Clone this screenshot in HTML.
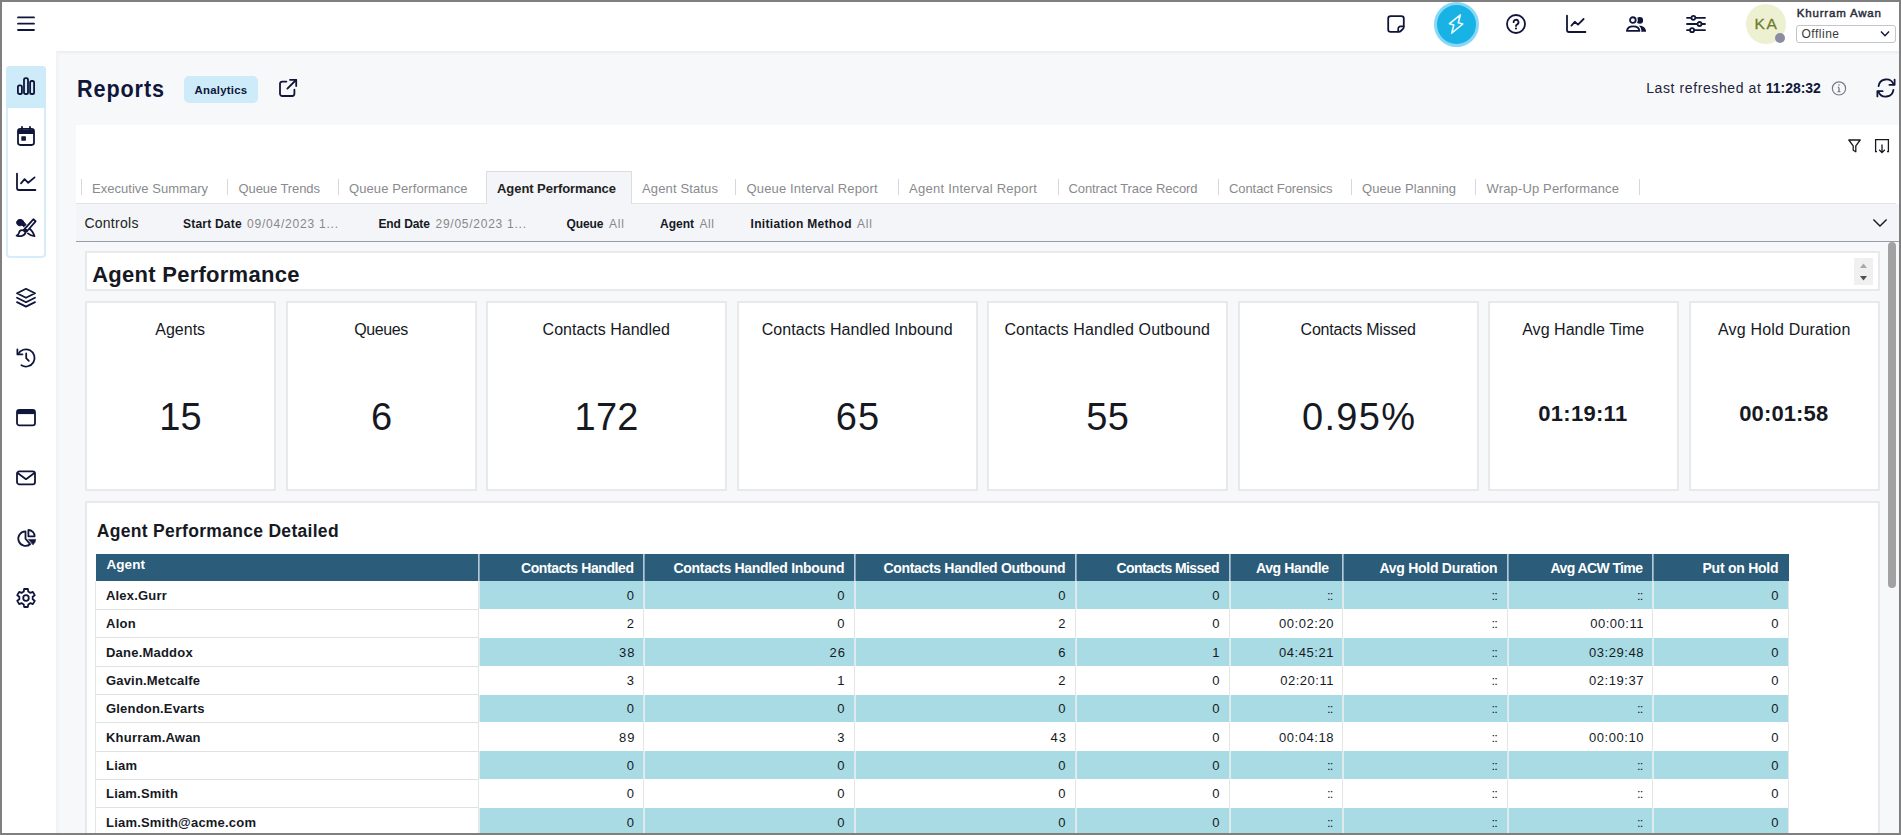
<!DOCTYPE html>
<html lang="en">
<head>
<meta charset="utf-8">
<title>Reports - Analytics</title>
<style>
*{box-sizing:border-box;margin:0;padding:0}
html,body{width:1901px;height:835px;overflow:hidden;background:#fff;font-family:"Liberation Sans",sans-serif}
#app{position:absolute;left:0;top:0;width:1901px;height:835px;overflow:hidden;background:#fff}
.t{position:absolute;white-space:pre;display:block}
.abs{position:absolute}
svg{position:absolute;overflow:visible}
.frame{position:absolute;left:0;top:0;width:1901px;height:835px;border-style:solid;border-color:#7f7f7f;border-width:2px 2px 2px 2px;pointer-events:none;z-index:50}
.main{position:absolute;left:56px;top:51px;width:1845px;height:784px;background:#f7f8fa}
.card{position:absolute;background:#fff;border:2px solid #e9e9ec}
.ico{stroke:#10163a;fill:none;stroke-width:1.8;stroke-linecap:round;stroke-linejoin:round}
</style>
</head>
<body>
<div id="app">

<div class="main"></div>
<div class="abs" style="left:56px;top:51px;width:4px;height:784px;background:linear-gradient(90deg,#f0f1f3,#f7f8fa)"></div>
<div class="abs" style="left:56px;top:51px;width:1845px;height:4px;background:linear-gradient(#ececee,#f7f8fa)"></div>
<nav aria-label="Main navigation">
<div class="abs" style="left:0;top:51px;width:56px;height:784px;background:#fff"></div>
<div class="abs" style="left:6px;top:66px;width:40px;height:192px;border:2px solid #d5edfa;border-radius:4px;background:#fff"></div>
<div class="abs" style="left:6px;top:66px;width:40px;height:42px;background:#cdebf8;border-radius:4px 4px 0 0"></div>
<svg style="left:16px;top:76px" width="20" height="20" viewBox="0 0 20 20" ><g class="ico" stroke-width="1.7"><rect x="1.9" y="9.4" width="4" height="8.6" rx="1.6"/><rect x="8" y="2.2" width="4" height="15.8" rx="1.6"/><rect x="14.1" y="5" width="4" height="13" rx="1.6"/></g></svg>
<svg style="left:16px;top:125px" width="20" height="22" viewBox="0 0 20 22" ><g class="ico" stroke-width="1.9"><rect x="2" y="3.8" width="16" height="16.2" rx="2.4"/><path d="M6 1.800v3M14 1.800v3"/><path d="M2 6.800h16" stroke-width="4.400" stroke-linecap="butt"/><rect x="5.300" y="11.200" width="4.600" height="4.600" rx=".5" fill="#10163a" stroke="none"/></g></svg>
<svg style="left:16px;top:172px" width="20" height="20" viewBox="0 0 20 20" ><g class="ico" stroke-width="1.9"><path d="M1 1.6V16a2 2 0 0 0 2 2h16.4"/><path d="M5 11.400L8.600 7.200L12.200 10.800L18.600 5.400"/></g></svg>
<svg style="left:16px;top:218px" width="20" height="20" viewBox="0 0 20 20" ><g class="ico" stroke-width="1.700"><path d="M12.300 9.800c3.200 2.200 5.200 5 6.200 8.400-2.600-.3-4.800-1.200-6.600-2.800" fill="none"/><path d="M4.700 1.500a3.200 3.200 0 0 1 3.100 2.500l2.300 2.700-2.500 2.100-1.600-1.900A3.200 3.200 0 1 1 4.700 1.500z" fill="#10163a" stroke-width="1"/><path d="M17.300 1.300l2.300 2-8.400 9.700-2.500-2.100z" fill="#fff"/><path d="M8.900 10.500l2.600 2.200-1.500 1.800-2.700-2.200z" fill="#10163a" stroke-width="1"/><path d="M7.300 12.300c-2.300-.5-3.800.5-4.200 2.300-.3 1.400-.9 2.400-2.500 3 3.300 1 8.200.7 9-3.300z" fill="#fff"/></g></svg>
<svg style="left:16px;top:287px" width="20" height="22" viewBox="0 0 20 22" ><g class="ico" stroke-width="1.9"><path d="M10 1.800l9 4.500-9 4.500-9-4.500z"/><path d="M1 10.700l9 4.500 9-4.500"/><path d="M1 15.100l9 4.500 9-4.500"/></g></svg>
<svg style="left:16px;top:347px" width="20" height="22" viewBox="0 0 20 22" ><g class="ico" stroke-width="1.9"><path d="M1.400 2.400v5h5"/><path d="M2.200 7.200A8.600 8.600 0 1 1 5.400 18.200"/><path d="M10.200 6.400v4.800l2.600 2.600"/></g></svg>
<svg style="left:16px;top:408px" width="20" height="20" viewBox="0 0 20 20" ><g class="ico" stroke-width="1.9"><rect x="1" y="2" width="18" height="15.400" rx="2.400"/><path d="M1.400 4.200h17.200" stroke-width="3.800" stroke-linecap="butt"/></g></svg>
<svg style="left:16px;top:469px" width="20" height="18" viewBox="0 0 20 18" ><g class="ico" stroke-width="1.9"><rect x="1" y="2.400" width="18" height="13" rx="2.400"/><path d="M1.600 4l8.400 6.200 8.400-6.200"/></g></svg>
<svg style="left:16px;top:528px" width="21" height="20" viewBox="0 0 21 20" ><g class="ico" stroke-width="1.700"><path d="M9.500 3.450A7.200 7.200 0 1 0 14.100 16.200L9.500 10.650z"/><path d="M12.400 2A6.200 6.200 0 0 1 18.600 8.300H12.400z"/><path d="M12.600 11.400H19.700A7.400 7.400 0 0 1 17.100 16.800z" fill="#10163a" stroke-width=".6"/></g></svg>
<svg style="left:16px;top:588px" width="20" height="20" viewBox="0 0 20 20" ><g class="ico" stroke-width="1.9"><path d="M8.09 1.00L11.91 1.00L12.24 3.58L14.44 4.85L16.84 3.84L18.75 7.16L16.68 8.73L16.68 11.27L18.75 12.84L16.84 16.16L14.44 15.15L12.24 16.42L11.91 19.00L8.09 19.00L7.76 16.42L5.56 15.15L3.16 16.16L1.25 12.84L3.32 11.27L3.32 8.73L1.25 7.16L3.16 3.84L5.56 4.85L7.76 3.58z" stroke-linejoin="round"/><circle cx="10" cy="10" r="2.800"/></g></svg>
</nav>
<header>
<div class="abs" style="left:0;top:0;width:1901px;height:51px;background:#fff"></div>
<svg style="left:16px;top:14px" width="20" height="20" viewBox="0 0 20 20" ><g class="ico" stroke-width="2"><path d="M2 3.400h16M2 9.700h16M2 16h16"/></g></svg>
<svg style="left:1386px;top:14px" width="20" height="20" viewBox="0 0 20 20" ><g class="ico" stroke-width="1.900"><path d="M4.600 2.200h10.800a2.400 2.400 0 0 1 2.400 2.400v8.200c0 .8-.3 1.500-.8 2l-2.200 2.200c-.5.500-1.200.800-2 .800H4.600a2.400 2.400 0 0 1-2.400-2.400V4.600a2.400 2.400 0 0 1 2.400-2.400z"/><path d="M17.500 12.400h-3.100a2.200 2.200 0 0 0-2.200 2.200v2.900" stroke-width="1.700"/></g></svg>
<div class="abs" style="left:1433.7px;top:2px;width:45px;height:45px;border-radius:50%;background:#19b2e5;border:3px solid #86d8f6"></div>
<svg style="left:1446px;top:14px" width="20" height="20" viewBox="0 0 20 20" ><path d="M14.400 .9L3.500 9.700l4.300 1.400-2.100 8L16.800 10l-4.500-1.200z" fill="none" stroke="#eafaff" stroke-width="1.600" stroke-linejoin="round"/></svg>
<svg style="left:1506px;top:14px" width="20" height="20" viewBox="0 0 20 20" ><g class="ico" stroke-width="1.900"><circle cx="10" cy="10" r="9"/><path d="M7.600 8.200a2.450 2.450 0 1 1 3.600 2.200c-.8.400-1.200.9-1.200 1.600"/><circle cx="10" cy="14.500" r="1.100" fill="#10163a" stroke="none"/></g></svg>
<svg style="left:1566px;top:14px" width="20" height="20" viewBox="0 0 20 20" ><g class="ico" stroke-width="1.900"><path d="M1 1.600V16a2 2 0 0 0 2 2h16.400"/><path d="M5.400 11.600l3.400-3.800 3.200 2.800 5.600-5.600"/></g></svg>
<svg style="left:1626px;top:15px" width="21" height="18" viewBox="0 0 21 18" ><g class="ico" stroke-width="1.800"><circle cx="13.800" cy="5.400" r="3.300" fill="#10163a" stroke="none"/><path d="M12.600 10.900c4.300-.6 7.300 1.900 7.500 5.900h-6.500z" fill="#10163a" stroke="none"/><circle cx="6.850" cy="5.100" r="4.950" fill="#fff" stroke="none"/><path d="M.95 15.900c.3-3 2.700-4.600 6.250-4.600s5.950 1.600 6.250 4.600z" fill="#fff" stroke="#fff" stroke-width="4"/><circle cx="6.850" cy="5.100" r="2.850"/><path d="M.95 15.900c.3-3 2.700-4.600 6.250-4.600s5.950 1.600 6.250 4.600z"/></g></svg>
<svg style="left:1686px;top:14px" width="20" height="20" viewBox="0 0 20 20" ><g class="ico" stroke-width="1.900"><path d="M1 3.800h18M1 10h18M1 16.200h18"/><circle cx="7.400" cy="3.800" r="2" fill="#fff"/><circle cx="13.500" cy="10" r="2" fill="#fff"/><circle cx="6.100" cy="16.200" r="2" fill="#fff"/></g></svg>
<div class="abs" style="left:1746px;top:4px;width:40px;height:40px;border-radius:50%;background:#eef0d2"></div>
<span class="t" style="left:1754.40px;top:14.8px;font-size:15.5px;line-height:17px;color:#6d7c2a;letter-spacing:1.712px;-webkit-text-stroke:.3px #6d7c2a;">KA</span>
<div class="abs" style="left:1775px;top:33px;width:10px;height:10px;border-radius:50%;background:#8b8da0"></div>
<span class="t" style="left:1796.70px;top:6.600000000000001px;font-size:11.5px;line-height:12px;color:#2a2d3e;letter-spacing:0.826px;-webkit-text-stroke:.45px #2a2d3e;">Khurram Awan</span>
<div class="abs" style="left:1796px;top:25px;width:100px;height:18px;border:1px solid #c3c4cc;border-radius:3px;background:#fff"></div>
<span class="t" style="left:1801.50px;top:27px;font-size:12px;line-height:14px;color:#3a3a3a;letter-spacing:0.505px;">Offline</span>
<svg style="left:1880px;top:30px" width="10" height="8" viewBox="0 0 10 8" ><path d="M1 1.600l4 4.200 4-4.200" fill="none" stroke="#10163a" stroke-width="1.400"/></svg>
</header>
<main>
<section aria-label="Page header">
<h1 class="t" style="left:76.60px;top:75px;font-size:24px;line-height:27px;color:#10163a;font-weight:700;letter-spacing:0.997px;transform:scaleX(.9);transform-origin:0 0;">Reports</h1>
<div class="abs" style="left:184px;top:76px;width:74px;height:27px;border-radius:5px;background:#cdebf8"></div>
<span class="t" style="left:194.60px;top:84px;font-size:11.4px;line-height:12px;color:#10163a;font-weight:700;letter-spacing:0.243px;">Analytics</span>
<svg style="left:278px;top:78px" width="20" height="20" viewBox="0 0 20 20" ><g class="ico" stroke-width="1.900"><path d="M8.400 3.600H4.200A2.200 2.200 0 0 0 2 5.800v10A2.200 2.200 0 0 0 4.200 18h10a2.200 2.200 0 0 0 2.200-2.200v-4.200"/><path d="M12 1.800h6.200V8"/><path d="M18 2L9.400 10.600"/></g></svg>
<span class="t" style="left:1646.20px;top:80px;font-size:14px;line-height:16px;color:#20233a;letter-spacing:0.596px;">Last refreshed at</span>
<span class="t" style="left:1765.80px;top:80px;font-size:14px;line-height:16px;color:#10163a;font-weight:700;letter-spacing:-0.040px;">11:28:32</span>
<svg style="left:1830.6px;top:80.2px" width="16" height="16" viewBox="0 0 16 16" ><g fill="none" stroke="#777a88" stroke-width="1.200"><circle cx="8" cy="8.400" r="6.600"/><path d="M8 7.400v4M6.800 7.400H8M6.600 11.600h2.800" stroke-width="1.300"/><circle cx="8" cy="5" r=".8" fill="#777a88" stroke="none"/></g></svg>
<svg style="left:1876.2px;top:78.4px" width="20" height="20" viewBox="0 0 20 20" ><g class="ico" stroke-width="1.900"><path d="M18.600 1.600v5.200h-5.200"/><path d="M1.400 18.400v-5.200h5.200"/><path d="M2.600 8.200A7.800 7.800 0 0 1 17.600 6.400"/><path d="M17.400 11.800A7.800 7.800 0 0 1 2.400 13.600"/></g></svg>
</section>
<section aria-label="Report tabs">
<div class="abs" style="left:76px;top:125px;width:1823px;height:79px;background:#fff"></div>
<div class="abs" style="left:76px;top:203px;width:1820px;height:1px;background:#e2e3e7"></div>
<svg style="left:1847.6px;top:139px" width="13" height="14" viewBox="0 0 13 14" ><path d="M.8 1h11.400L7.800 6.800V12.800L5.200 11.200V6.800z" fill="none" stroke="#16191f" stroke-width="1.300" stroke-linejoin="round"/></svg>
<svg style="left:1874px;top:138px" width="16" height="16" viewBox="0 0 16 16" ><g fill="none" stroke="#16191f" stroke-width="1.300"><path d="M3 13.600H1.600V1.600h12.800v12H13"/><path d="M8 6.600v8M5.200 11.800l2.800 2.800 2.800-2.800"/></g></svg>
<span class="t" style="left:92.00px;top:181px;font-size:13px;line-height:15px;color:#898a8d;letter-spacing:0.025px;">Executive Summary</span>
<span class="t" style="left:238.50px;top:181px;font-size:13px;line-height:15px;color:#898a8d;letter-spacing:-0.081px;">Queue Trends</span>
<span class="t" style="left:349.00px;top:181px;font-size:13px;line-height:15px;color:#898a8d;letter-spacing:0.089px;">Queue Performance</span>
<span class="t" style="left:642.00px;top:181px;font-size:13px;line-height:15px;color:#898a8d;letter-spacing:0.141px;">Agent Status</span>
<span class="t" style="left:746.50px;top:181px;font-size:13px;line-height:15px;color:#898a8d;letter-spacing:0.155px;">Queue Interval Report</span>
<span class="t" style="left:909.00px;top:181px;font-size:13px;line-height:15px;color:#898a8d;letter-spacing:0.257px;">Agent Interval Report</span>
<span class="t" style="left:1068.50px;top:181px;font-size:13px;line-height:15px;color:#898a8d;letter-spacing:-0.089px;">Contract Trace Record</span>
<span class="t" style="left:1229.00px;top:181px;font-size:13px;line-height:15px;color:#898a8d;letter-spacing:-0.079px;">Contact Forensics</span>
<span class="t" style="left:1362.00px;top:181px;font-size:13px;line-height:15px;color:#898a8d;letter-spacing:0.058px;">Queue Planning</span>
<span class="t" style="left:1486.50px;top:181px;font-size:13px;line-height:15px;color:#898a8d;letter-spacing:0.149px;">Wrap-Up Performance</span>
<div class="abs" style="left:81.0px;top:179px;width:1px;height:16px;background:#d7d8dc"></div>
<div class="abs" style="left:227.0px;top:179px;width:1px;height:16px;background:#d7d8dc"></div>
<div class="abs" style="left:338.0px;top:179px;width:1px;height:16px;background:#d7d8dc"></div>
<div class="abs" style="left:735.0px;top:179px;width:1px;height:16px;background:#d7d8dc"></div>
<div class="abs" style="left:898.0px;top:179px;width:1px;height:16px;background:#d7d8dc"></div>
<div class="abs" style="left:1058.0px;top:179px;width:1px;height:16px;background:#d7d8dc"></div>
<div class="abs" style="left:1218.2px;top:179px;width:1px;height:16px;background:#d7d8dc"></div>
<div class="abs" style="left:1350.5px;top:179px;width:1px;height:16px;background:#d7d8dc"></div>
<div class="abs" style="left:1474.5px;top:179px;width:1px;height:16px;background:#d7d8dc"></div>
<div class="abs" style="left:1639.0px;top:179px;width:1px;height:16px;background:#d7d8dc"></div>
<div class="abs" style="left:486px;top:171px;width:146px;height:33px;background:#f4f5f9;border:1px solid #dcdde1;border-bottom:none"></div>
<span class="t" style="left:497.00px;top:181px;font-size:13px;line-height:15px;color:#222;font-weight:700;letter-spacing:-0.058px;">Agent Performance</span>
</section>
<section aria-label="Controls">
<div class="abs" style="left:76px;top:204px;width:1823px;height:38px;background:#f4f5f9;border-bottom:1px solid #9a9ca6"></div>
<span class="t" style="left:84.40px;top:215px;font-size:14px;line-height:16px;color:#222;letter-spacing:0.266px;">Controls</span>
<span class="t" style="left:183.00px;top:217px;font-size:12px;line-height:14px;color:#16191f;font-weight:700;letter-spacing:0.212px;">Start Date</span>
<span class="t" style="left:247.00px;top:217px;font-size:12px;line-height:14px;color:#87888b;letter-spacing:0.780px;">09/04/2023 1...</span>
<span class="t" style="left:378.40px;top:217px;font-size:12px;line-height:14px;color:#16191f;font-weight:700;letter-spacing:-0.059px;">End Date</span>
<span class="t" style="left:435.50px;top:217px;font-size:12px;line-height:14px;color:#87888b;letter-spacing:0.744px;">29/05/2023 1...</span>
<span class="t" style="left:566.50px;top:217px;font-size:12px;line-height:14px;color:#16191f;font-weight:700;letter-spacing:-0.086px;">Queue</span>
<span class="t" style="left:609.00px;top:217px;font-size:12px;line-height:14px;color:#87888b;letter-spacing:0.828px;">All</span>
<span class="t" style="left:660.00px;top:217px;font-size:12px;line-height:14px;color:#16191f;font-weight:700;">Agent</span>
<span class="t" style="left:699.50px;top:217px;font-size:12px;line-height:14px;color:#87888b;letter-spacing:0.578px;">All</span>
<span class="t" style="left:750.50px;top:217px;font-size:12px;line-height:14px;color:#16191f;font-weight:700;letter-spacing:0.313px;">Initiation Method</span>
<span class="t" style="left:857.00px;top:217px;font-size:12px;line-height:14px;color:#87888b;letter-spacing:0.828px;">All</span>
<svg style="left:1872px;top:218px" width="16" height="10" viewBox="0 0 16 10" ><path d="M1.400 1.600l6.600 6.400 6.600-6.400" fill="none" stroke="#16191f" stroke-width="1.400"/></svg>
</section>
<section aria-label="Agent Performance dashboard">
<div class="abs" style="left:1888.2px;top:242.3px;width:7.6px;height:345.5px;background:#a2a2a2;border-radius:4px"></div>
<div class="card" style="left:85px;top:251.400px;width:1795px;height:40px"></div>
<h2 class="t" style="left:92.20px;top:262px;font-size:22px;line-height:25px;color:#16191f;font-weight:700;letter-spacing:0.265px;">Agent Performance</h2>
<div class="abs" style="left:1854px;top:258px;width:18.6px;height:27px;background:#f0f0f0"></div>
<svg style="left:1859.8px;top:263.3px" width="7" height="6" viewBox="0 0 7 6" ><path d="M0 5l3.500-4.500 3.500 4.500z" fill="#a8a8a8"/></svg>
<svg style="left:1859.8px;top:274.8px" width="7" height="6" viewBox="0 0 7 6" ><path d="M0 1l3.500 4.500 3.500-4.500z" fill="#505050"/></svg>
<div class="card" style="left:85px;top:301px;width:191px;height:190px"></div>
<span class="t" style="left:155.30px;top:321.3px;font-size:16px;line-height:17px;color:#16191f;">Agents</span>
<span class="t" style="left:159.36px;top:396px;font-size:38px;line-height:42px;color:#16191f;">15</span>
<div class="card" style="left:286px;top:301px;width:191px;height:190px"></div>
<span class="t" style="left:354.25px;top:321.3px;font-size:16px;line-height:17px;color:#16191f;letter-spacing:-0.429px;">Queues</span>
<span class="t" style="left:370.93px;top:396px;font-size:38px;line-height:42px;color:#16191f;">6</span>
<div class="card" style="left:486px;top:301px;width:241px;height:190px"></div>
<span class="t" style="left:542.60px;top:321.3px;font-size:16px;line-height:17px;color:#16191f;">Contacts Handled</span>
<span class="t" style="left:574.50px;top:396px;font-size:38px;line-height:42px;color:#16191f;letter-spacing:0.297px;">172</span>
<div class="card" style="left:737px;top:301px;width:241px;height:190px"></div>
<span class="t" style="left:761.70px;top:321.3px;font-size:16px;line-height:17px;color:#16191f;letter-spacing:0.067px;">Contacts Handled Inbound</span>
<span class="t" style="left:835.85px;top:396px;font-size:38px;line-height:42px;color:#16191f;letter-spacing:1.019px;">65</span>
<div class="card" style="left:987px;top:301px;width:241px;height:190px"></div>
<span class="t" style="left:1004.40px;top:321.3px;font-size:16px;line-height:17px;color:#16191f;letter-spacing:0.153px;">Contacts Handled Outbound</span>
<span class="t" style="left:1086.20px;top:396px;font-size:38px;line-height:42px;color:#16191f;letter-spacing:0.319px;">55</span>
<div class="card" style="left:1238px;top:301px;width:241px;height:190px"></div>
<span class="t" style="left:1300.55px;top:321.3px;font-size:16px;line-height:17px;color:#16191f;letter-spacing:-0.212px;">Contacts Missed</span>
<span class="t" style="left:1302.00px;top:396px;font-size:38px;line-height:42px;color:#16191f;letter-spacing:1.312px;">0.95%</span>
<div class="card" style="left:1488px;top:301px;width:191px;height:190px"></div>
<span class="t" style="left:1522.20px;top:321.3px;font-size:16px;line-height:17px;color:#16191f;letter-spacing:0.032px;">Avg Handle Time</span>
<span class="t" style="left:1538.20px;top:400.5px;font-size:22px;line-height:25px;color:#16191f;font-weight:700;letter-spacing:0.306px;">01:19:11</span>
<div class="card" style="left:1689px;top:301px;width:191px;height:190px"></div>
<span class="t" style="left:1718.05px;top:321.3px;font-size:16px;line-height:17px;color:#16191f;letter-spacing:0.171px;">Avg Hold Duration</span>
<span class="t" style="left:1739.20px;top:400.5px;font-size:22px;line-height:25px;color:#16191f;font-weight:700;letter-spacing:0.132px;">00:01:58</span>
<div class="card" style="left:85px;top:501px;width:1795px;height:340px"></div>
<h3 class="t" style="left:96.80px;top:521px;font-size:17.5px;line-height:20px;color:#16191f;font-weight:700;letter-spacing:0.297px;">Agent Performance Detailed</h3>
<div class="abs" style="left:96px;top:553.5px;width:1692.5px;height:27.5px;background:#2b5c79"></div>
<span class="t" style="left:106.40px;top:557px;font-size:13.5px;line-height:15px;color:#fff;font-weight:700;letter-spacing:0.088px;">Agent</span>
<span class="t" style="left:521.00px;top:560px;font-size:14px;line-height:16px;color:#fff;font-weight:700;letter-spacing:-0.401px;">Contacts Handled</span>
<span class="t" style="left:673.50px;top:560px;font-size:14px;line-height:16px;color:#fff;font-weight:700;letter-spacing:-0.309px;">Contacts Handled Inbound</span>
<span class="t" style="left:883.50px;top:560px;font-size:14px;line-height:16px;color:#fff;font-weight:700;letter-spacing:-0.324px;">Contacts Handled Outbound</span>
<span class="t" style="left:1116.50px;top:560px;font-size:14px;line-height:16px;color:#fff;font-weight:700;letter-spacing:-0.589px;">Contacts Missed</span>
<span class="t" style="left:1256.00px;top:560px;font-size:14px;line-height:16px;color:#fff;font-weight:700;letter-spacing:-0.389px;">Avg Handle</span>
<span class="t" style="left:1379.50px;top:560px;font-size:14px;line-height:16px;color:#fff;font-weight:700;letter-spacing:-0.273px;">Avg Hold Duration</span>
<span class="t" style="left:1550.60px;top:560px;font-size:14px;line-height:16px;color:#fff;font-weight:700;letter-spacing:-0.604px;">Avg ACW Time</span>
<span class="t" style="left:1702.50px;top:560px;font-size:14px;line-height:16px;color:#fff;font-weight:700;letter-spacing:-0.255px;">Put on Hold</span>
<div class="abs" style="left:478.5px;top:581.20px;width:1310.0px;height:27.85px;background:#a9dbe4"></div>
<div class="abs" style="left:96px;top:608.80px;width:382.5px;height:1px;background:#e1e1e1"></div>
<span class="t" style="left:106.00px;top:588px;font-size:13px;line-height:15px;color:#16191f;font-weight:700;letter-spacing:0.185px;">Alex.Gurr</span>
<span class="t" style="left:626.77px;top:588px;font-size:13px;line-height:15px;color:#16191f;">0</span>
<span class="t" style="left:837.27px;top:588px;font-size:13px;line-height:15px;color:#16191f;">0</span>
<span class="t" style="left:1058.27px;top:588px;font-size:13px;line-height:15px;color:#16191f;">0</span>
<span class="t" style="left:1212.27px;top:588px;font-size:13px;line-height:15px;color:#16191f;">0</span>
<span class="t" style="left:1327.10px;top:588px;font-size:13px;line-height:15px;color:#16191f;letter-spacing:-0.834px;">::</span>
<span class="t" style="left:1491.60px;top:588px;font-size:13px;line-height:15px;color:#16191f;letter-spacing:-0.834px;">::</span>
<span class="t" style="left:1637.10px;top:588px;font-size:13px;line-height:15px;color:#16191f;letter-spacing:-0.834px;">::</span>
<span class="t" style="left:1771.27px;top:588px;font-size:13px;line-height:15px;color:#16191f;">0</span>
<div class="abs" style="left:96px;top:637.15px;width:382.5px;height:1px;background:#e1e1e1"></div>
<span class="t" style="left:106.00px;top:616px;font-size:13px;line-height:15px;color:#16191f;font-weight:700;letter-spacing:0.241px;">Alon</span>
<span class="t" style="left:626.77px;top:616px;font-size:13px;line-height:15px;color:#16191f;">2</span>
<span class="t" style="left:837.27px;top:616px;font-size:13px;line-height:15px;color:#16191f;">0</span>
<span class="t" style="left:1058.27px;top:616px;font-size:13px;line-height:15px;color:#16191f;">2</span>
<span class="t" style="left:1212.27px;top:616px;font-size:13px;line-height:15px;color:#16191f;">0</span>
<span class="t" style="left:1279.09px;top:616px;font-size:13px;line-height:15px;color:#16191f;letter-spacing:0.542px;">00:02:20</span>
<span class="t" style="left:1491.60px;top:616px;font-size:13px;line-height:15px;color:#16191f;letter-spacing:-0.834px;">::</span>
<span class="t" style="left:1590.14px;top:616px;font-size:13px;line-height:15px;color:#16191f;letter-spacing:0.532px;">00:00:11</span>
<span class="t" style="left:1771.27px;top:616px;font-size:13px;line-height:15px;color:#16191f;">0</span>
<div class="abs" style="left:478.5px;top:637.90px;width:1310.0px;height:27.85px;background:#a9dbe4"></div>
<div class="abs" style="left:96px;top:665.50px;width:382.5px;height:1px;background:#e1e1e1"></div>
<span class="t" style="left:106.00px;top:645px;font-size:13px;line-height:15px;color:#16191f;font-weight:700;letter-spacing:0.211px;">Dane.Maddox</span>
<span class="t" style="left:618.95px;top:645px;font-size:13px;line-height:15px;color:#16191f;letter-spacing:1.085px;">38</span>
<span class="t" style="left:829.45px;top:645px;font-size:13px;line-height:15px;color:#16191f;letter-spacing:1.085px;">26</span>
<span class="t" style="left:1058.27px;top:645px;font-size:13px;line-height:15px;color:#16191f;">6</span>
<span class="t" style="left:1212.27px;top:645px;font-size:13px;line-height:15px;color:#16191f;">1</span>
<span class="t" style="left:1279.09px;top:645px;font-size:13px;line-height:15px;color:#16191f;letter-spacing:0.542px;">04:45:21</span>
<span class="t" style="left:1491.60px;top:645px;font-size:13px;line-height:15px;color:#16191f;letter-spacing:-0.834px;">::</span>
<span class="t" style="left:1589.09px;top:645px;font-size:13px;line-height:15px;color:#16191f;letter-spacing:0.542px;">03:29:48</span>
<span class="t" style="left:1771.27px;top:645px;font-size:13px;line-height:15px;color:#16191f;">0</span>
<div class="abs" style="left:96px;top:693.85px;width:382.5px;height:1px;background:#e1e1e1"></div>
<span class="t" style="left:106.00px;top:673px;font-size:13px;line-height:15px;color:#16191f;font-weight:700;letter-spacing:0.176px;">Gavin.Metcalfe</span>
<span class="t" style="left:626.77px;top:673px;font-size:13px;line-height:15px;color:#16191f;">3</span>
<span class="t" style="left:837.27px;top:673px;font-size:13px;line-height:15px;color:#16191f;">1</span>
<span class="t" style="left:1058.27px;top:673px;font-size:13px;line-height:15px;color:#16191f;">2</span>
<span class="t" style="left:1212.27px;top:673px;font-size:13px;line-height:15px;color:#16191f;">0</span>
<span class="t" style="left:1280.14px;top:673px;font-size:13px;line-height:15px;color:#16191f;letter-spacing:0.532px;">02:20:11</span>
<span class="t" style="left:1491.60px;top:673px;font-size:13px;line-height:15px;color:#16191f;letter-spacing:-0.834px;">::</span>
<span class="t" style="left:1589.09px;top:673px;font-size:13px;line-height:15px;color:#16191f;letter-spacing:0.542px;">02:19:37</span>
<span class="t" style="left:1771.27px;top:673px;font-size:13px;line-height:15px;color:#16191f;">0</span>
<div class="abs" style="left:478.5px;top:694.60px;width:1310.0px;height:27.85px;background:#a9dbe4"></div>
<div class="abs" style="left:96px;top:722.20px;width:382.5px;height:1px;background:#e1e1e1"></div>
<span class="t" style="left:106.00px;top:701px;font-size:13px;line-height:15px;color:#16191f;font-weight:700;letter-spacing:0.185px;">Glendon.Evarts</span>
<span class="t" style="left:626.77px;top:701px;font-size:13px;line-height:15px;color:#16191f;">0</span>
<span class="t" style="left:837.27px;top:701px;font-size:13px;line-height:15px;color:#16191f;">0</span>
<span class="t" style="left:1058.27px;top:701px;font-size:13px;line-height:15px;color:#16191f;">0</span>
<span class="t" style="left:1212.27px;top:701px;font-size:13px;line-height:15px;color:#16191f;">0</span>
<span class="t" style="left:1327.10px;top:701px;font-size:13px;line-height:15px;color:#16191f;letter-spacing:-0.834px;">::</span>
<span class="t" style="left:1491.60px;top:701px;font-size:13px;line-height:15px;color:#16191f;letter-spacing:-0.834px;">::</span>
<span class="t" style="left:1637.10px;top:701px;font-size:13px;line-height:15px;color:#16191f;letter-spacing:-0.834px;">::</span>
<span class="t" style="left:1771.27px;top:701px;font-size:13px;line-height:15px;color:#16191f;">0</span>
<div class="abs" style="left:96px;top:750.55px;width:382.5px;height:1px;background:#e1e1e1"></div>
<span class="t" style="left:106.00px;top:730px;font-size:13px;line-height:15px;color:#16191f;font-weight:700;letter-spacing:0.210px;">Khurram.Awan</span>
<span class="t" style="left:618.95px;top:730px;font-size:13px;line-height:15px;color:#16191f;letter-spacing:1.085px;">89</span>
<span class="t" style="left:837.27px;top:730px;font-size:13px;line-height:15px;color:#16191f;">3</span>
<span class="t" style="left:1050.45px;top:730px;font-size:13px;line-height:15px;color:#16191f;letter-spacing:1.085px;">43</span>
<span class="t" style="left:1212.27px;top:730px;font-size:13px;line-height:15px;color:#16191f;">0</span>
<span class="t" style="left:1279.09px;top:730px;font-size:13px;line-height:15px;color:#16191f;letter-spacing:0.542px;">00:04:18</span>
<span class="t" style="left:1491.60px;top:730px;font-size:13px;line-height:15px;color:#16191f;letter-spacing:-0.834px;">::</span>
<span class="t" style="left:1589.09px;top:730px;font-size:13px;line-height:15px;color:#16191f;letter-spacing:0.542px;">00:00:10</span>
<span class="t" style="left:1771.27px;top:730px;font-size:13px;line-height:15px;color:#16191f;">0</span>
<div class="abs" style="left:478.5px;top:751.30px;width:1310.0px;height:27.85px;background:#a9dbe4"></div>
<div class="abs" style="left:96px;top:778.90px;width:382.5px;height:1px;background:#e1e1e1"></div>
<span class="t" style="left:106.00px;top:758px;font-size:13px;line-height:15px;color:#16191f;font-weight:700;letter-spacing:0.253px;">Liam</span>
<span class="t" style="left:626.77px;top:758px;font-size:13px;line-height:15px;color:#16191f;">0</span>
<span class="t" style="left:837.27px;top:758px;font-size:13px;line-height:15px;color:#16191f;">0</span>
<span class="t" style="left:1058.27px;top:758px;font-size:13px;line-height:15px;color:#16191f;">0</span>
<span class="t" style="left:1212.27px;top:758px;font-size:13px;line-height:15px;color:#16191f;">0</span>
<span class="t" style="left:1327.10px;top:758px;font-size:13px;line-height:15px;color:#16191f;letter-spacing:-0.834px;">::</span>
<span class="t" style="left:1491.60px;top:758px;font-size:13px;line-height:15px;color:#16191f;letter-spacing:-0.834px;">::</span>
<span class="t" style="left:1637.10px;top:758px;font-size:13px;line-height:15px;color:#16191f;letter-spacing:-0.834px;">::</span>
<span class="t" style="left:1771.27px;top:758px;font-size:13px;line-height:15px;color:#16191f;">0</span>
<div class="abs" style="left:96px;top:807.25px;width:382.5px;height:1px;background:#e1e1e1"></div>
<span class="t" style="left:106.00px;top:786px;font-size:13px;line-height:15px;color:#16191f;font-weight:700;letter-spacing:0.195px;">Liam.Smith</span>
<span class="t" style="left:626.77px;top:786px;font-size:13px;line-height:15px;color:#16191f;">0</span>
<span class="t" style="left:837.27px;top:786px;font-size:13px;line-height:15px;color:#16191f;">0</span>
<span class="t" style="left:1058.27px;top:786px;font-size:13px;line-height:15px;color:#16191f;">0</span>
<span class="t" style="left:1212.27px;top:786px;font-size:13px;line-height:15px;color:#16191f;">0</span>
<span class="t" style="left:1327.10px;top:786px;font-size:13px;line-height:15px;color:#16191f;letter-spacing:-0.834px;">::</span>
<span class="t" style="left:1491.60px;top:786px;font-size:13px;line-height:15px;color:#16191f;letter-spacing:-0.834px;">::</span>
<span class="t" style="left:1637.10px;top:786px;font-size:13px;line-height:15px;color:#16191f;letter-spacing:-0.834px;">::</span>
<span class="t" style="left:1771.27px;top:786px;font-size:13px;line-height:15px;color:#16191f;">0</span>
<div class="abs" style="left:478.5px;top:808.00px;width:1310.0px;height:27.85px;background:#a9dbe4"></div>
<div class="abs" style="left:96px;top:835.60px;width:382.5px;height:1px;background:#e1e1e1"></div>
<span class="t" style="left:106.00px;top:815px;font-size:13px;line-height:15px;color:#16191f;font-weight:700;letter-spacing:0.203px;">Liam.Smith@acme.com</span>
<span class="t" style="left:626.77px;top:815px;font-size:13px;line-height:15px;color:#16191f;">0</span>
<span class="t" style="left:837.27px;top:815px;font-size:13px;line-height:15px;color:#16191f;">0</span>
<span class="t" style="left:1058.27px;top:815px;font-size:13px;line-height:15px;color:#16191f;">0</span>
<span class="t" style="left:1212.27px;top:815px;font-size:13px;line-height:15px;color:#16191f;">0</span>
<span class="t" style="left:1327.10px;top:815px;font-size:13px;line-height:15px;color:#16191f;letter-spacing:-0.834px;">::</span>
<span class="t" style="left:1491.60px;top:815px;font-size:13px;line-height:15px;color:#16191f;letter-spacing:-0.834px;">::</span>
<span class="t" style="left:1637.10px;top:815px;font-size:13px;line-height:15px;color:#16191f;letter-spacing:-0.834px;">::</span>
<span class="t" style="left:1771.27px;top:815px;font-size:13px;line-height:15px;color:#16191f;">0</span>
<div class="abs" style="left:95.4px;top:581px;width:1px;height:254px;background:#e4e5e5"></div>
<div class="abs" style="left:477.9px;top:581px;width:1px;height:254px;background:#e4e5e5"></div>
<div class="abs" style="left:478.9px;top:581px;width:1px;height:254px;background:rgba(255,255,255,.55)"></div>
<div class="abs" style="left:477.9px;top:554px;width:1px;height:27px;background:#b0cadb"></div>
<div class="abs" style="left:478.9px;top:554px;width:1px;height:27px;background:#87a3b6"></div>
<div class="abs" style="left:643.4px;top:581px;width:1px;height:254px;background:#e4e5e5"></div>
<div class="abs" style="left:644.4px;top:581px;width:1px;height:254px;background:rgba(255,255,255,.55)"></div>
<div class="abs" style="left:643.4px;top:554px;width:1px;height:27px;background:#b0cadb"></div>
<div class="abs" style="left:644.4px;top:554px;width:1px;height:27px;background:#87a3b6"></div>
<div class="abs" style="left:853.9px;top:581px;width:1px;height:254px;background:#e4e5e5"></div>
<div class="abs" style="left:854.9px;top:581px;width:1px;height:254px;background:rgba(255,255,255,.55)"></div>
<div class="abs" style="left:853.9px;top:554px;width:1px;height:27px;background:#b0cadb"></div>
<div class="abs" style="left:854.9px;top:554px;width:1px;height:27px;background:#87a3b6"></div>
<div class="abs" style="left:1074.9px;top:581px;width:1px;height:254px;background:#e4e5e5"></div>
<div class="abs" style="left:1075.9px;top:581px;width:1px;height:254px;background:rgba(255,255,255,.55)"></div>
<div class="abs" style="left:1074.9px;top:554px;width:1px;height:27px;background:#b0cadb"></div>
<div class="abs" style="left:1075.9px;top:554px;width:1px;height:27px;background:#87a3b6"></div>
<div class="abs" style="left:1228.9px;top:581px;width:1px;height:254px;background:#e4e5e5"></div>
<div class="abs" style="left:1229.9px;top:581px;width:1px;height:254px;background:rgba(255,255,255,.55)"></div>
<div class="abs" style="left:1228.9px;top:554px;width:1px;height:27px;background:#b0cadb"></div>
<div class="abs" style="left:1229.9px;top:554px;width:1px;height:27px;background:#87a3b6"></div>
<div class="abs" style="left:1342.4px;top:581px;width:1px;height:254px;background:#e4e5e5"></div>
<div class="abs" style="left:1343.4px;top:581px;width:1px;height:254px;background:rgba(255,255,255,.55)"></div>
<div class="abs" style="left:1342.4px;top:554px;width:1px;height:27px;background:#b0cadb"></div>
<div class="abs" style="left:1343.4px;top:554px;width:1px;height:27px;background:#87a3b6"></div>
<div class="abs" style="left:1506.9px;top:581px;width:1px;height:254px;background:#e4e5e5"></div>
<div class="abs" style="left:1507.9px;top:581px;width:1px;height:254px;background:rgba(255,255,255,.55)"></div>
<div class="abs" style="left:1506.9px;top:554px;width:1px;height:27px;background:#b0cadb"></div>
<div class="abs" style="left:1507.9px;top:554px;width:1px;height:27px;background:#87a3b6"></div>
<div class="abs" style="left:1652.4px;top:581px;width:1px;height:254px;background:#e4e5e5"></div>
<div class="abs" style="left:1653.4px;top:581px;width:1px;height:254px;background:rgba(255,255,255,.55)"></div>
<div class="abs" style="left:1652.4px;top:554px;width:1px;height:27px;background:#b0cadb"></div>
<div class="abs" style="left:1653.4px;top:554px;width:1px;height:27px;background:#87a3b6"></div>
<div class="abs" style="left:1788px;top:581px;width:1px;height:254px;background:#e6e6e6"></div>
</section>
</main>
<div class="frame"></div>
</div>
</body>
</html>
